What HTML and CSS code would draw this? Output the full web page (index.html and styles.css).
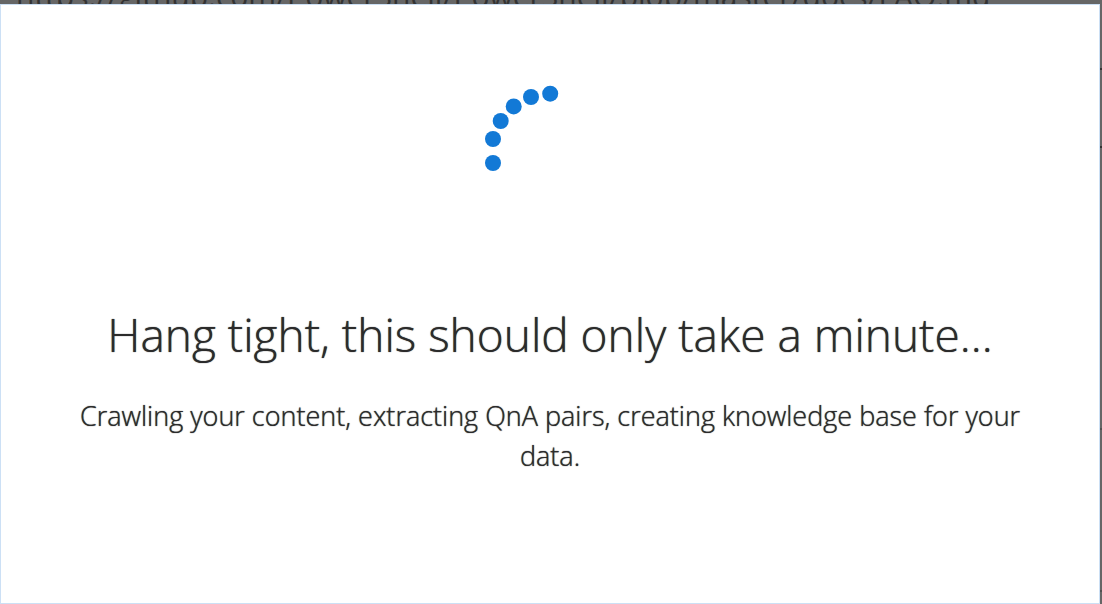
FILE: index.html
```html
<!DOCTYPE html>
<html lang="en">
<head>
<meta charset="utf-8">
<title>Creating knowledge base</title>
<link rel="stylesheet" href="styles.css">
</head>
<body>
<div class="backdrop">
  <div class="source-url">https://github.com/PowerShell/PowerShell/blob/master/docs/FAQ.md</div>
</div>
<main class="dialog" role="dialog" aria-labelledby="title" aria-describedby="message">
  <svg class="spinner" viewBox="0 0 130 130" role="img" aria-label="Loading">
    <circle cx="8" cy="78" r="8"/>
    <circle cx="8" cy="54" r="8"/>
    <circle cx="15.700" cy="36" r="8"/>
    <circle cx="28.700" cy="21.400" r="8"/>
    <circle cx="46" cy="12" r="8"/>
    <circle cx="65.200" cy="8.700" r="8"/>
  </svg>
  <h1 class="title" id="title">Hang tight, this should only take a minute...</h1>
  <p class="message" id="message">Crawling your content, extracting QnA pairs, creating knowledge base for your data.</p>
</main>
</body>
</html>
```
FILE: styles.css
```css
* {
  box-sizing: border-box;
}

body {
  margin: 0;
  min-height: 100vh;
  display: flex;
  flex-direction: column;
  padding-right: 2px;
  /* edges of the form fields behind the dialog */
  background:
    linear-gradient(#333, #333) right 68px / 2px 2px no-repeat,
    linear-gradient(#333, #333) right 146px / 2px 2px no-repeat,
    linear-gradient(#505050, #505050) right 428px / 2px 2px no-repeat,
    linear-gradient(#505050, #505050) right 590px / 2px 2px no-repeat,
    #666;
  color: #2b2b2b;
  font-family: "Open Sans", "Noto Sans", sans-serif;
}

.backdrop {
  display: flex;
  align-items: flex-end;
  height: 4px;
  padding-left: 16px;
  overflow: hidden;
}

.source-url {
  color: #333;
  font-size: 30px;
  line-height: 16px;
  white-space: nowrap;
}

.dialog {
  flex: 1;
  display: flex;
  flex-direction: column;
  align-items: center;
  padding: 80px 64px;
  border: 1px solid #cce0f5;
  background: #fff;
  text-align: center;
}

.spinner {
  width: 130px;
  height: 130px;
  fill: #1279d6;
}

.title {
  margin: 87px 0 0;
  font-size: 46px;
  font-weight: 300;
  line-height: 64px;
  text-shadow: 0 0 1px #2b2b2b;
}

.message {
  margin: 30px 0 0;
  font-size: 27px;
  font-weight: 300;
  line-height: 40px;
  text-shadow: 0 0 1px #2b2b2b;
}
```
